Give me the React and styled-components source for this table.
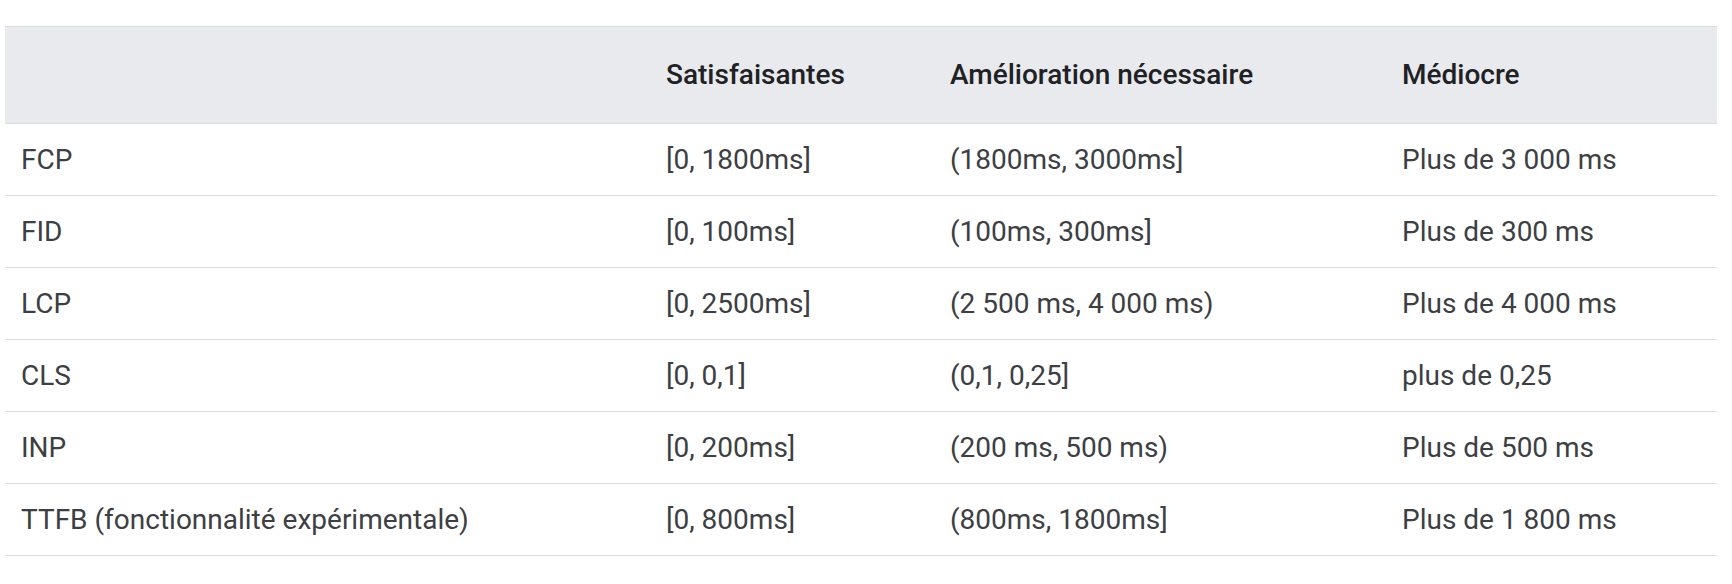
import React from "react";
import styled, { createGlobalStyle } from "styled-components";

const Global = createGlobalStyle`
  html, body { margin: 0; padding: 0; background: #fff; }
  body { font-family: Roboto, "Noto Sans", Arial, sans-serif; color: #202124; }
`;

const Wrap = styled.div`
  padding: 26px 15px 0 5px;
`;

const Table = styled.table`
  width: 1712px;
  border-collapse: collapse;
  table-layout: fixed;
  font-size: 28px;
  line-height: 36px;
`;

const Head = styled.thead`
  background: #e8eaed;
`;

const Row = styled.tr`
  border-top: 1px solid #dadce0;
  border-bottom: 1px solid #dadce0;
`;

const HeadRow = styled(Row)`
  height: 97px;
`;

const BodyRow = styled(Row)`
  height: 72px;
`;

const Th = styled.th`
  text-align: left;
  font-weight: 500;
  color: #202124;
  padding: 0 16px;
  vertical-align: middle;
  white-space: nowrap;
`;

const Td = styled.td`
  padding: 0 16px;
  font-weight: 400;
  color: #3c4043;
  vertical-align: middle;
  white-space: nowrap;
`;

const rows = [
  ["FCP", "[0, 1800ms]", "(1800ms, 3000ms]", "Plus de 3 000 ms"],
  ["FID", "[0, 100ms]", "(100ms, 300ms]", "Plus de 300 ms"],
  ["LCP", "[0, 2500ms]", "(2 500 ms, 4 000 ms)", "Plus de 4 000 ms"],
  ["CLS", "[0, 0,1]", "(0,1, 0,25]", "plus de 0,25"],
  ["INP", "[0, 200ms]", "(200 ms, 500 ms)", "Plus de 500 ms"],
  ["TTFB (fonctionnalité expérimentale)", "[0, 800ms]", "(800ms, 1800ms]", "Plus de 1 800 ms"],
];

export default function App() {
  return (
    <Wrap>
      <Global />
      <Table>
        <colgroup>
          <col style={{ width: 645 }} />
          <col style={{ width: 284 }} />
          <col style={{ width: 452 }} />
          <col style={{ width: 331 }} />
        </colgroup>
        <Head>
          <HeadRow>
            <Th></Th>
            <Th>Satisfaisantes</Th>
            <Th>Amélioration nécessaire</Th>
            <Th>Médiocre</Th>
          </HeadRow>
        </Head>
        <tbody>
          {rows.map((r) => (
            <BodyRow key={r[0]}>
              {r.map((c, i) => (
                <Td key={i}>{c}</Td>
              ))}
            </BodyRow>
          ))}
        </tbody>
      </Table>
    </Wrap>
  );
}
